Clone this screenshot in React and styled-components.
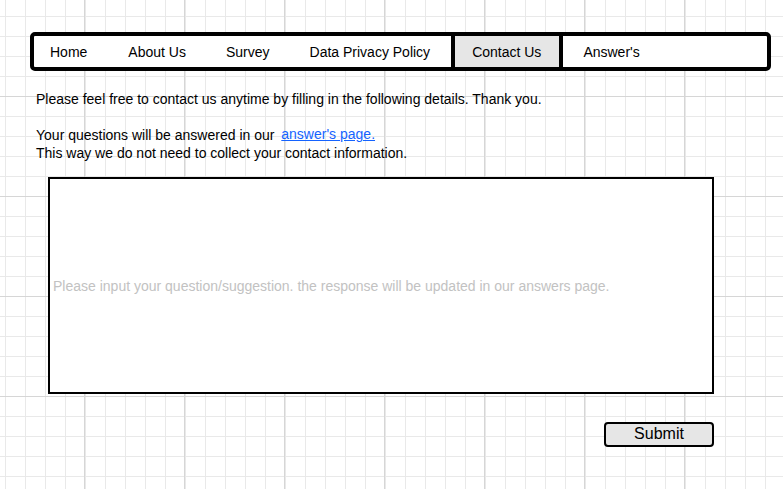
import React from 'react'
import styled, { createGlobalStyle } from 'styled-components'

const GlobalStyle = createGlobalStyle`
html{
    height: 100%;
    background-color: #ffffff;
    background-image:
        linear-gradient(to right, #d6d6d6 1px, transparent 1px),
        linear-gradient(to bottom, #d6d6d6 1px, transparent 1px),
        linear-gradient(to right, #e9e9e9 1px, transparent 1px),
        linear-gradient(to bottom, #e9e9e9 1px, transparent 1px);
    background-size: 100px 100px, 100px 100px, 20px 20px, 20px 20px;
    background-position: 84px 96px, 84px 96px, 5px 16px, 5px 16px;
}
body{
    margin: 0;
    font-family: "Liberation Sans", Arial, sans-serif;
    color: #000;
}
`

const navItems = [
    { label: 'Home', pad: '0 21px 0 16px' },
    { label: 'About Us', pad: '0 20px' },
    { label: 'Survey', pad: '0 20px' },
    { label: 'Data Privacy Policy', pad: '0 21px 0 20px' },
    { label: 'Contact Us', pad: '0 18px 0 17px', active: true },
    { label: "Answer's", pad: '0 20px' },
]

function App() {
    return (
        <Page>
            <GlobalStyle />
            <Nav>
                {navItems.map((item) =>
                    <NavItem key={item.label} $pad={item.pad} $active={item.active} href="#">
                        {item.label}
                    </NavItem>
                )}
            </Nav>

            <Intro>
                Please feel free to contact us anytime by filling in the following details. Thank you.
                <br />
                <br />
                Your questions will be answered in our <AnswerLink href="#">answer's page.</AnswerLink>
                <br />
                This way we do not need to collect your contact information.
            </Intro>

            <Form onSubmit={(e) => e.preventDefault()}>
                <Question
                    type="text"
                    placeholder="Please input your question/suggestion. the response will be updated in our answers page."
                />
                <SubmitButton type="submit">Submit</SubmitButton>
            </Form>
        </Page>
    )
}

export default App

const Page = styled.div`
padding: 32px 0 0 30px;
`

const Nav = styled.nav`
display: flex;
align-items: stretch;
width: 741px;
height: 39px;
box-sizing: border-box;
border: 4px solid #000;
border-radius: 5px;
background-color: #fff;
`

const NavItem = styled.a`
display: flex;
align-items: center;
padding: ${p => p.$pad};
font-size: 14px;
color: #000;
text-decoration: none;
background-color: ${p => p.$active ? '#e6e6e6' : 'transparent'};
border-left: ${p => p.$active ? '4px solid #000' : 'none'};
border-right: ${p => p.$active ? '4px solid #000' : 'none'};
`

const Intro = styled.p`
margin: 19px 0 0 6px;
font-size: 14px;
line-height: 18px;
`

const AnswerLink = styled.a`
margin-left: 3px;
color: #1463ff;
text-decoration: underline;
position: relative;
top: -1px;
`

const Form = styled.form`
display: flex;
flex-direction: column;
align-items: flex-end;
width: 666px;
margin: 15px 0 0 18px;
`

const Question = styled.input`
width: 100%;
height: 217px;
box-sizing: border-box;
border: 2px solid #000;
padding: 0 3px;
margin: 0;
font-family: "Liberation Sans", Arial, sans-serif;
font-size: 14px;
background-color: #fff;
outline: none;
&::placeholder{
    color: #c2c2c2;
}
`

const SubmitButton = styled.button`
width: 110px;
height: 25px;
margin-top: 28px;
box-sizing: border-box;
border: 2px solid #000;
border-radius: 4px;
background-color: #e6e6e6;
font-family: "Liberation Sans", Arial, sans-serif;
font-size: 16px;
color: #000;
padding: 0 0 2px;
cursor: pointer;
`
